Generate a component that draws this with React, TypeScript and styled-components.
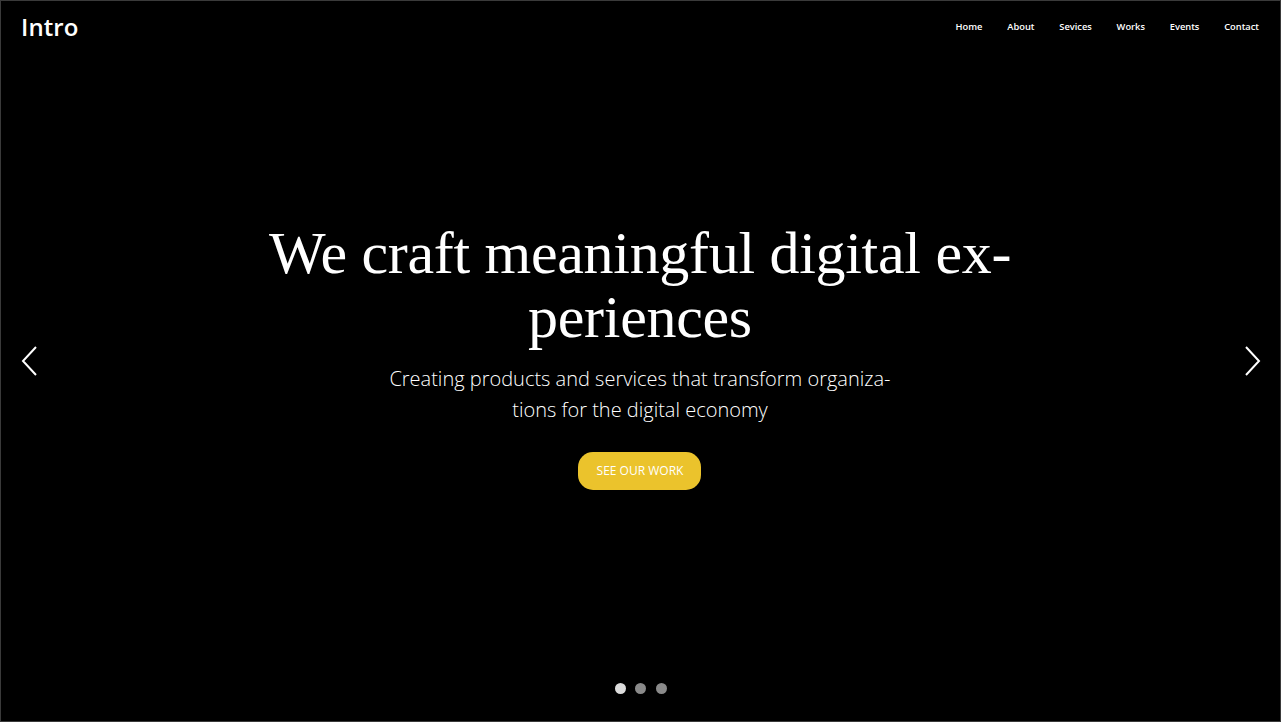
import React from "react";
import styled, { createGlobalStyle } from "styled-components";

const Global = createGlobalStyle`
  html, body { margin: 0; padding: 0; background: #000; }
  body { font-family: "Open Sans", "Liberation Sans", sans-serif; }
  * { box-sizing: border-box; }
`;

const Page = styled.div`
  width: 1281px;
  height: 722px;
  background: #000;
  border: 1px solid #3a3a3a;
  position: relative;
  display: flex;
  flex-direction: column;
  overflow: hidden;
  color: #fff;
`;

const Header = styled.header`
  display: flex;
  align-items: center;
  justify-content: space-between;
  padding: 9px 21px 0 20px;
  height: 42px;
`;

const Logo = styled.div`
  font-size: 24px;
  font-weight: 600;
  letter-spacing: 0.1px;
  line-height: 32px;
`;

const Nav = styled.nav`
  display: flex;
  gap: 24.8px;
`;

const NavLink = styled.a`
  font-size: 9.3px;
  font-weight: 600;
  color: #fff;
  text-decoration: none;
`;

const Hero = styled.main`
  flex: 1;
  display: flex;
  align-items: center;
  justify-content: space-between;
  padding: 0 19px 0 20px;
`;

const Arrow = styled.button`
  width: 18px;
  height: 32px;
  padding: 0;
  background: none;
  border: none;
  display: flex;
  align-items: center;
  justify-content: center;
  margin-top: -5px;
`;

const Content = styled.div`
  display: flex;
  flex-direction: column;
  align-items: center;
  text-align: center;
  margin-top: -16px;
  margin-right: 2px;
`;

const Title = styled.h1`
  margin: 0;
  font-family: "Liberation Serif", "DejaVu Serif", serif;
  font-weight: 400;
  font-size: 60px;
  line-height: 64px;
  letter-spacing: -0.3px;
`;

const Subtitle = styled.p`
  margin: 14px 0 0;
  font-size: 20px;
  font-weight: 300;
  line-height: 31px;
`;

const Cta = styled.button`
  margin-top: 27px;
  height: 38px;
  width: 123px;
  border: none;
  border-radius: 15px;
  background: #ebc32c;
  color: #fff;
  font-family: "Open Sans", sans-serif;
  font-size: 12px;
  font-weight: 400;
  text-transform: uppercase;
`;

const Dots = styled.div`
  display: flex;
  justify-content: center;
  gap: 9.5px;
  padding-bottom: 27px;
`;

const Dot = styled.span<{ $active?: boolean }>`
  width: 11px;
  height: 11px;
  border-radius: 50%;
  background: ${(p) => (p.$active ? "#dcdcdc" : "#8a8a8a")};
`;

const Chevron = ({ dir }: { dir: "left" | "right" }) => (
  <svg width="18" height="32" viewBox="0 0 18 32" fill="none">
    <path
      d={dir === "left" ? "M15 2 L2 16 L15 30" : "M3 2 L16 16 L3 30"}
      stroke="#fff"
      strokeWidth="2"
    />
  </svg>
);

export default function App() {
  const links = ["Home", "About", "Sevices", "Works", "Events", "Contact"];
  return (
    <>
      <Global />
      <Page>
        <Header>
          <Logo>Intro</Logo>
          <Nav>
            {links.map((l) => (
              <NavLink key={l} href="#">
                {l}
              </NavLink>
            ))}
          </Nav>
        </Header>
        <Hero>
          <Arrow aria-label="Previous">
            <Chevron dir="left" />
          </Arrow>
          <Content>
            <Title>
              We craft meaningful digital ex-
              <br />
              periences
            </Title>
            <Subtitle>
              Creating products and services that transform organiza-
              <br />
              tions for the digital economy
            </Subtitle>
            <Cta>See our work</Cta>
          </Content>
          <Arrow aria-label="Next">
            <Chevron dir="right" />
          </Arrow>
        </Hero>
        <Dots>
          <Dot $active />
          <Dot />
          <Dot />
        </Dots>
      </Page>
    </>
  );
}
